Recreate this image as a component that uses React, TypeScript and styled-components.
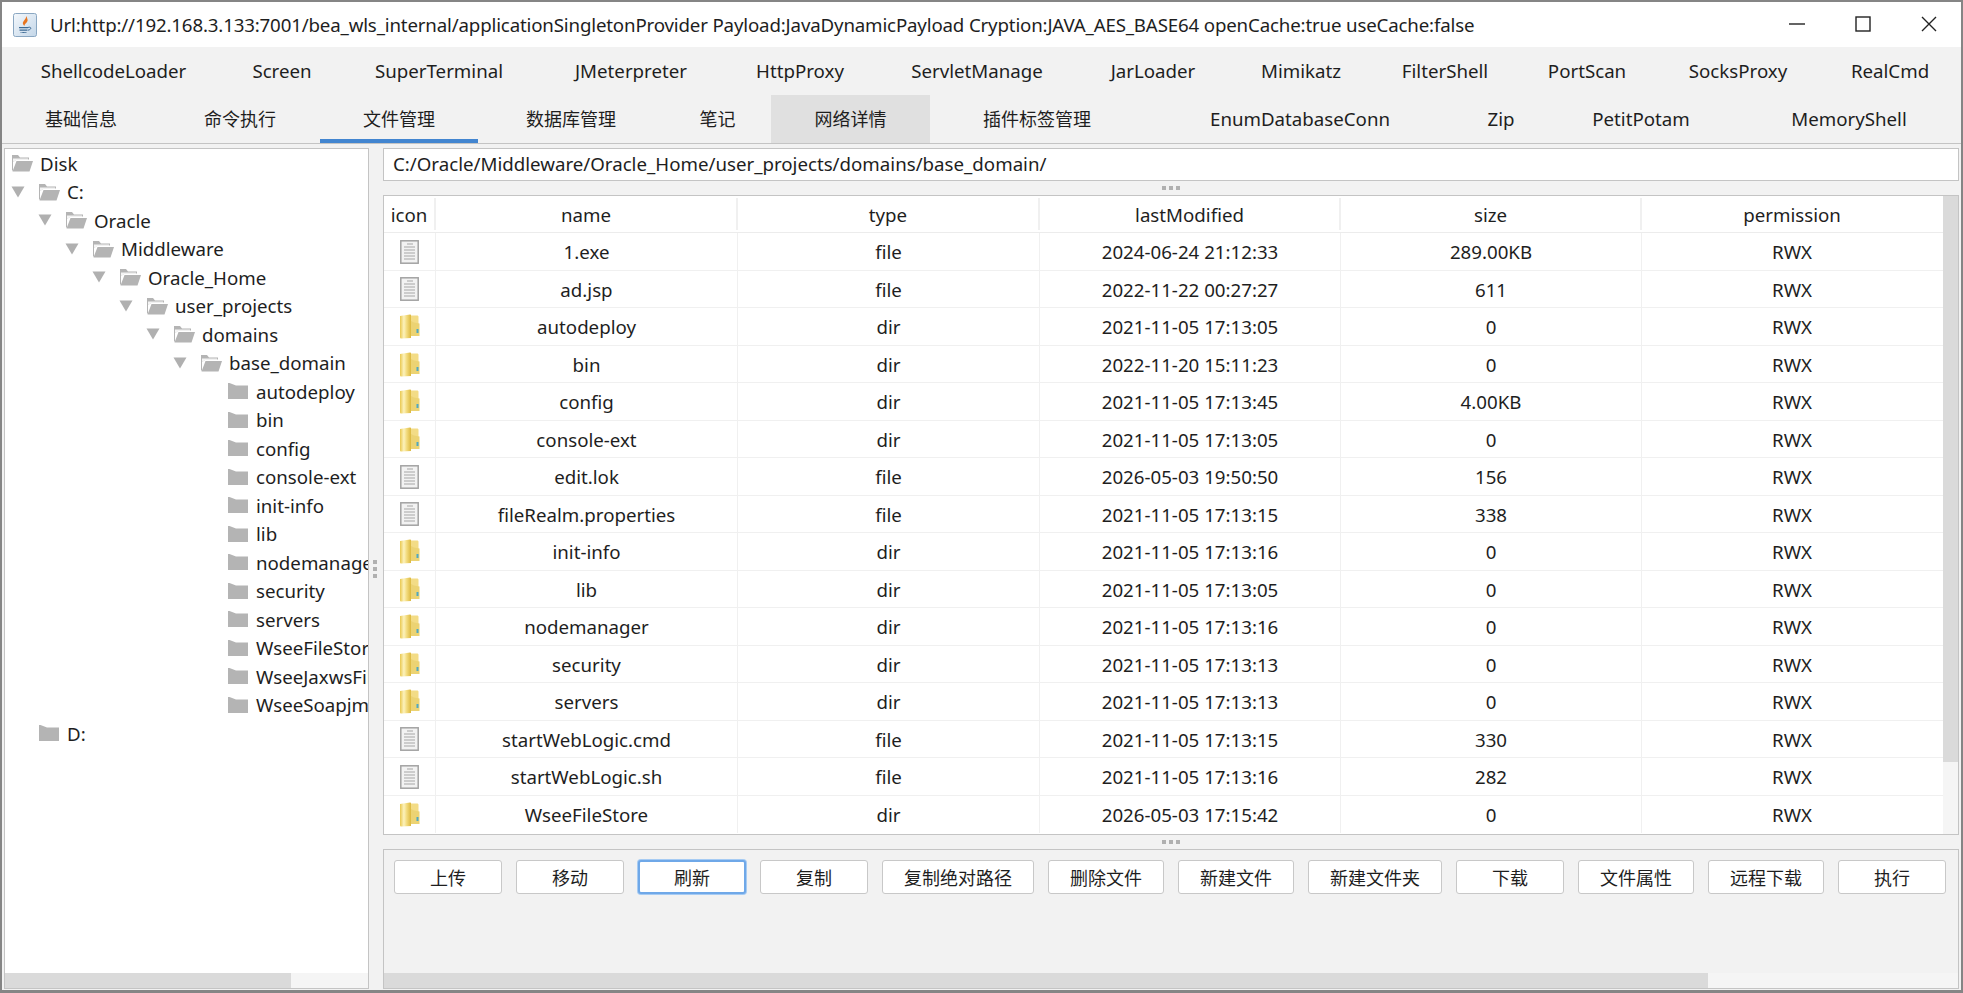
import React from "react";
import styled, { createGlobalStyle } from "styled-components";

const GlobalStyle = createGlobalStyle`
  html, body {
    margin: 0;
    padding: 0;
    background: #f2f2f2;
  }
  * {
    box-sizing: border-box;
  }
`;

const topTabs = [
  { label: "ShellcodeLoader", width: 223 },
  { label: "Screen", width: 114 },
  { label: "SuperTerminal", width: 200 },
  { label: "JMeterpreter", width: 184 },
  { label: "HttpProxy", width: 154 },
  { label: "ServletManage", width: 200 },
  { label: "JarLoader", width: 152 },
  { label: "Mimikatz", width: 144 },
  { label: "FilterShell", width: 144 },
  { label: "PortScan", width: 140 },
  { label: "SocksProxy", width: 162 },
  { label: "RealCmd", width: 142 },
];

const bottomTabs = [
  { label: "基础信息", width: 158, cjk: true },
  { label: "命令执行", width: 160, cjk: true },
  { label: "文件管理", width: 158, cjk: true, active: true },
  { label: "数据库管理", width: 186, cjk: true },
  { label: "笔记", width: 107, cjk: true },
  { label: "网络详情", width: 159, cjk: true, hover: true },
  { label: "插件标签管理", width: 214, cjk: true },
  { label: "EnumDatabaseConn", width: 312 },
  { label: "Zip", width: 90 },
  { label: "PetitPotam", width: 190 },
  { label: "MemoryShell", width: 226 },
];

const treeNodes = [
  { label: "Disk", level: 0, open: true, arrow: false },
  { label: "C:", level: 1, open: true, arrow: true },
  { label: "Oracle", level: 2, open: true, arrow: true },
  { label: "Middleware", level: 3, open: true, arrow: true },
  { label: "Oracle_Home", level: 4, open: true, arrow: true },
  { label: "user_projects", level: 5, open: true, arrow: true },
  { label: "domains", level: 6, open: true, arrow: true },
  { label: "base_domain", level: 7, open: true, arrow: true },
  { label: "autodeploy", level: 8 },
  { label: "bin", level: 8 },
  { label: "config", level: 8 },
  { label: "console-ext", level: 8 },
  { label: "init-info", level: 8 },
  { label: "lib", level: 8 },
  { label: "nodemanager", level: 8 },
  { label: "security", level: 8 },
  { label: "servers", level: 8 },
  { label: "WseeFileStore", level: 8 },
  { label: "WseeJaxwsFile", level: 8 },
  { label: "WseeSoapjms", level: 8 },
  { label: "D:", level: 1 },
];

const files = [
  ["1.exe", "file", "2024-06-24 21:12:33", "289.00KB"],
  ["ad.jsp", "file", "2022-11-22 00:27:27", "611"],
  ["autodeploy", "dir", "2021-11-05 17:13:05", "0"],
  ["bin", "dir", "2022-11-20 15:11:23", "0"],
  ["config", "dir", "2021-11-05 17:13:45", "4.00KB"],
  ["console-ext", "dir", "2021-11-05 17:13:05", "0"],
  ["edit.lok", "file", "2026-05-03 19:50:50", "156"],
  ["fileRealm.properties", "file", "2021-11-05 17:13:15", "338"],
  ["init-info", "dir", "2021-11-05 17:13:16", "0"],
  ["lib", "dir", "2021-11-05 17:13:05", "0"],
  ["nodemanager", "dir", "2021-11-05 17:13:16", "0"],
  ["security", "dir", "2021-11-05 17:13:13", "0"],
  ["servers", "dir", "2021-11-05 17:13:13", "0"],
  ["startWebLogic.cmd", "file", "2021-11-05 17:13:15", "330"],
  ["startWebLogic.sh", "file", "2021-11-05 17:13:16", "282"],
  ["WseeFileStore", "dir", "2026-05-03 17:15:42", "0"],
];

const buttons = ["上传", "移动", "刷新", "复制", "复制绝对路径", "删除文件", "新建文件", "新建文件夹", "下载", "文件属性", "远程下载", "执行"];

const Frame = styled.div`
  width: 1963px;
  height: 993px;
  display: flex;
  flex-direction: column;
  overflow: hidden;
  background: #f2f2f2;
  border: solid #858585;
  border-width: 2px 2px 3px 2px;
  color: #1e1e1e;
  font-family: "Noto Sans", "Noto Sans CJK SC", sans-serif;
  font-size: 18.7px;
`;

const TitleBar = styled.div`
  height: 45px;
  flex: none;
  display: flex;
  align-items: center;
  background: #ffffff;
  padding-left: 11px;
`;

const TitleText = styled.span`
  flex: 1;
  margin-left: 13px;
  white-space: nowrap;
  letter-spacing: -0.16px;
`;

const WindowControls = styled.div`
  display: flex;
  align-items: center;
  margin-right: -1px;
  margin-top: -1px;
`;

const WindowButton = styled.div`
  width: 66px;
  height: 30px;
  display: flex;
  align-items: center;
  justify-content: center;
`;

const TabRow = styled.div<{ $last?: boolean }>`
  height: ${(p) => (p.$last ? 49 : 48)}px;
  flex: none;
  display: flex;
  border-bottom: ${(p) => (p.$last ? "1px solid #c4c4c4" : "none")};
`;

const Tab = styled.div<{ $width: number; $cjk?: boolean; $active?: boolean; $hover?: boolean }>`
  flex: none;
  width: ${(p) => p.$width}px;
  display: flex;
  align-items: center;
  justify-content: center;
  white-space: nowrap;
  font-size: ${(p) => (p.$cjk ? "18px" : "inherit")};
  padding-bottom: 2px;
  background: ${(p) => (p.$hover ? "#e0e0e0" : "transparent")};
  box-shadow: ${(p) => (p.$active ? "inset 0 -4px 0 #4285d0" : "none")};
`;

const Body = styled.div`
  flex: 1;
  min-height: 0;
  display: flex;
  padding: 4px 2px 1px 2px;
`;

const TreePane = styled.div`
  width: 365px;
  flex: none;
  display: flex;
  flex-direction: column;
  background: #ffffff;
  border: 1px solid #c4c4c4;
`;

const TreeList = styled.div`
  flex: 1;
  min-height: 0;
  overflow: hidden;
`;

const TreeRow = styled.div<{ $level: number }>`
  position: relative;
  height: 28.5px;
  display: flex;
  align-items: center;
  gap: 7px;
  padding-left: ${(p) => 6 + p.$level * 27}px;
  white-space: nowrap;
`;

const TreeArrow = styled.span`
  position: absolute;
  display: flex;
  margin-left: -27px;
`;

const HScrollBar = styled.div`
  height: 15px;
  flex: none;
  background: #f5f5f5;
`;

const HScrollThumb = styled.div<{ $width: number }>`
  height: 100%;
  width: ${(p) => p.$width}px;
  background: #dadada;
`;

const VSplitter = styled.div`
  width: 14px;
  flex: none;
  display: flex;
  flex-direction: column;
  align-items: center;
  justify-content: center;
  gap: 3px;
  padding-right: 2px;
`;

const HSplitter = styled.div`
  height: 14px;
  flex: none;
  display: flex;
  align-items: center;
  justify-content: center;
  gap: 3px;
`;

const GripDot = styled.span`
  width: 4px;
  height: 4px;
  background: #b0b0b0;
`;

const RightPane = styled.div`
  flex: 1;
  min-width: 0;
  display: flex;
  flex-direction: column;
`;

const PathField = styled.div`
  height: 33px;
  flex: none;
  display: flex;
  align-items: center;
  padding: 0 0 2px 9px;
  background: #ffffff;
  border: 1px solid #c4c4c4;
  white-space: nowrap;
`;

const TableFrame = styled.div`
  height: 640px;
  flex: none;
  display: flex;
  background: #ffffff;
  border: 1px solid #c4c4c4;
`;

const TableBody = styled.div`
  flex: 1;
  min-width: 0;
  overflow: hidden;
`;

const columns = "52px 302px 302px 301px 301px 300px";

const HeaderRow = styled.div`
  height: 37px;
  display: grid;
  grid-template-columns: ${columns};
  align-items: center;
  text-align: center;
  border-bottom: 1px solid #ececec;
`;

const HeaderCell = styled.div`
  height: 32px;
  line-height: 34px;
  border-right: 2px solid #f0f0f0;

  &:last-child {
    border-right: none;
  }
`;

const DataRow = styled.div`
  height: 37.5px;
  display: grid;
  grid-template-columns: ${columns};
  text-align: center;
  border-bottom: 1px solid #f0f0f0;

  &:last-child {
    border-bottom: none;
  }
`;

const DataCell = styled.div`
  display: flex;
  align-items: center;
  justify-content: center;
  padding-top: 1px;
  border-right: 1px solid #f0f0f0;
  white-space: nowrap;

  &:last-child {
    border-right: none;
  }
`;

const VScrollBar = styled.div`
  width: 15px;
  flex: none;
  background: #f5f5f5;
`;

const VScrollThumb = styled.div`
  height: 566px;
  background: #dadada;
`;

const ButtonPanel = styled.div`
  flex: 1;
  min-height: 0;
  display: flex;
  flex-direction: column;
  border: 1px solid #c4c4c4;
`;

const ButtonRow = styled.div`
  flex: 1;
  display: flex;
  justify-content: center;
  gap: 14px;
  padding: 10px 2px 0 0;
`;

const ActionButton = styled.button<{ $focused?: boolean }>`
  height: 34px;
  min-width: 108px;
  padding: 0 21px;
  background: #ffffff;
  color: #1e1e1e;
  font-family: inherit;
  font-size: 18px;
  border: ${(p) => (p.$focused ? "2px solid #6fa8e8" : "1px solid #c8c8c8")};
  border-radius: 3px;
  box-shadow: ${(p) => (p.$focused ? "0 0 0 1px #a6cbf3" : "none")};
`;

const JavaIcon = () => (
  <svg width="24" height="24" viewBox="0 0 24 24">
    <defs>
      <linearGradient id="javaBg" x1="0" y1="0" x2="1" y2="1">
        <stop offset="0" stopColor="#f4f8fc" />
        <stop offset="1" stopColor="#c3d6e8" />
      </linearGradient>
    </defs>
    <rect x="0.5" y="0.5" width="23" height="23" rx="2" fill="url(#javaBg)" stroke="#8aa7c2" />
    <path d="M13 3c1 3-4 5-3 8 .4 1 1 1.5 1.5 2-.6-2 4-4 3-6.5C14 5 14 4 13 3z" fill="#e8741e" />
    <path d="M6 14h9v1.2H6zM6.5 16.5h8v1.2h-8zM7 19h7c-1 1.2-6 1.2-7 0z" fill="#3d6a94" />
    <path d="M15 14.5c2-.8 3.5.2 2.5 1.5-.6.7-1.6 1-2.5 1.2" fill="none" stroke="#3d6a94" strokeWidth="1" />
  </svg>
);

const OpenFolderIcon = () => (
  <svg width="22" height="18" viewBox="0 0 22 18" style={{ flex: "none" }}>
    <path d="M1 1h6l2 2.5h9v2H6L2 8v9L1 16z" fill="#b4b4b4" />
    <path d="M5.5 7H22l-3.5 10.5H1.5z" fill="#b4b4b4" />
    <path d="M2 4.5h15v1.2H6L2 8z" fill="#ffffff" opacity="0.85" />
  </svg>
);

const ClosedFolderIcon = () => (
  <svg width="22" height="18" viewBox="0 0 22 18" style={{ flex: "none" }}>
    <path d="M1 1h1.5L9 3.5h12v13.5H1z" fill="#b4b4b4" />
  </svg>
);

const ArrowIcon = () => (
  <svg width="14" height="12" viewBox="0 0 14 12">
    <path d="M0.5 0.5h13L7 11.5z" fill="#b0b0b0" />
  </svg>
);

const FileIcon = () => (
  <svg width="19" height="24" viewBox="0 0 19 24">
    <rect x="0.8" y="0.8" width="17.4" height="22.4" fill="#f2f2f2" stroke="#a2a2a2" strokeWidth="1.5" />
    <path d="M7 4h6M4 7h11M4 10h11M4 13h11M4 16h11M4 19h11" stroke="#a6a6a6" strokeWidth="1.2" />
  </svg>
);

const DirIcon = () => (
  <svg width="21" height="25" viewBox="0 0 21 25">
    <defs>
      <linearGradient id="dirFront" x1="0" y1="0" x2="1" y2="0">
        <stop offset="0" stopColor="#e9c850" />
        <stop offset="0.35" stopColor="#fcf2bc" />
        <stop offset="0.6" stopColor="#f3dc80" />
        <stop offset="1" stopColor="#dcb83e" />
      </linearGradient>
    </defs>
    <path d="M9 1.5h9c1 0 1.5.5 1.5 1.5v18.5H9z" fill="#f3dc86" />
    <path d="M1 2 11 .5c.6 0 1 .4 1 1V24l-9.5.5C1.5 24.5 1 24 1 23z" fill="url(#dirFront)" />
    <path d="M15 8.5 20.5 9.5V22H12V7z" fill="#ecd373" />
    <rect x="17.5" y="15" width="2" height="4" fill="#4ea7c4" />
  </svg>
);

const WindowMinimize = () => (
  <svg width="16" height="16" viewBox="0 0 16 16">
    <path d="M0 8h16" stroke="#222222" strokeWidth="1.4" />
  </svg>
);

const WindowMaximize = () => (
  <svg width="16" height="16" viewBox="0 0 16 16">
    <rect x="1" y="1" width="14" height="14" fill="none" stroke="#222222" strokeWidth="1.4" />
  </svg>
);

const WindowClose = () => (
  <svg width="16" height="16" viewBox="0 0 16 16">
    <path d="M1 1l14 14M15 1L1 15" stroke="#222222" strokeWidth="1.4" />
  </svg>
);

export default function App() {
  return (
    <Frame>
      <GlobalStyle />
      <TitleBar>
        <JavaIcon />
        <TitleText>
          Url:http://192.168.3.133:7001/bea_wls_internal/applicationSingletonProvider Payload:JavaDynamicPayload Cryption:JAVA_AES_BASE64 openCache:true useCache:false
        </TitleText>
        <WindowControls>
          <WindowButton>
            <WindowMinimize />
          </WindowButton>
          <WindowButton>
            <WindowMaximize />
          </WindowButton>
          <WindowButton>
            <WindowClose />
          </WindowButton>
        </WindowControls>
      </TitleBar>
      <TabRow>
        {topTabs.map((tab) => (
          <Tab key={tab.label} $width={tab.width}>
            {tab.label}
          </Tab>
        ))}
      </TabRow>
      <TabRow $last>
        {bottomTabs.map((tab) => (
          <Tab key={tab.label} $width={tab.width} $cjk={tab.cjk} $active={tab.active} $hover={tab.hover}>
            {tab.label}
          </Tab>
        ))}
      </TabRow>
      <Body>
        <TreePane>
          <TreeList>
            {treeNodes.map((node) => (
              <TreeRow key={node.label} $level={node.level}>
                {node.arrow && (
                  <TreeArrow>
                    <ArrowIcon />
                  </TreeArrow>
                )}
                {node.open ? <OpenFolderIcon /> : <ClosedFolderIcon />}
                {node.label}
              </TreeRow>
            ))}
          </TreeList>
          <HScrollBar>
            <HScrollThumb $width={286} />
          </HScrollBar>
        </TreePane>
        <VSplitter>
          <GripDot />
          <GripDot />
          <GripDot />
        </VSplitter>
        <RightPane>
          <PathField>C:/Oracle/Middleware/Oracle_Home/user_projects/domains/base_domain/</PathField>
          <HSplitter>
            <GripDot />
            <GripDot />
            <GripDot />
          </HSplitter>
          <TableFrame>
            <TableBody>
              <HeaderRow>
                {["icon", "name", "type", "lastModified", "size", "permission"].map((title) => (
                  <HeaderCell key={title}>{title}</HeaderCell>
                ))}
              </HeaderRow>
              {files.map(([name, type, modified, size]) => (
                <DataRow key={name}>
                  <DataCell>{type === "dir" ? <DirIcon /> : <FileIcon />}</DataCell>
                  <DataCell>{name}</DataCell>
                  <DataCell>{type}</DataCell>
                  <DataCell>{modified}</DataCell>
                  <DataCell>{size}</DataCell>
                  <DataCell>RWX</DataCell>
                </DataRow>
              ))}
            </TableBody>
            <VScrollBar>
              <VScrollThumb />
            </VScrollBar>
          </TableFrame>
          <HSplitter>
            <GripDot />
            <GripDot />
            <GripDot />
          </HSplitter>
          <ButtonPanel>
            <ButtonRow>
              {buttons.map((label) => (
                <div key={label}>
                  <ActionButton $focused={label === "刷新"}>{label}</ActionButton>
                </div>
              ))}
            </ButtonRow>
            <HScrollBar>
              <HScrollThumb $width={1324} />
            </HScrollBar>
          </ButtonPanel>
        </RightPane>
      </Body>
    </Frame>
  );
}
